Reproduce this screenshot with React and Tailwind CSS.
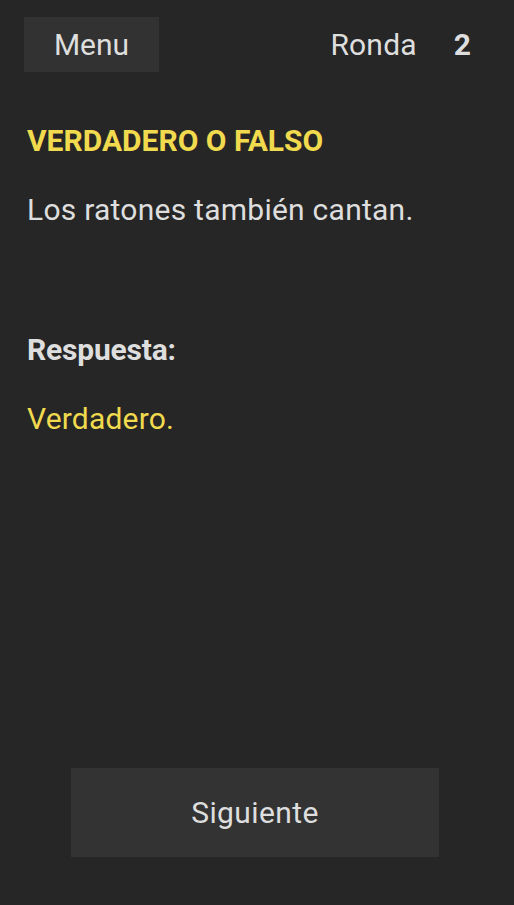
import React from 'react';

const App = () => {
    return (
        <div className="w-[514px] h-[905px] bg-[#262626] flex flex-col font-['Roboto',sans-serif] text-[#dedede] overflow-hidden">
            {/* Top bar */}
            <div className="flex items-center justify-between pt-[17px] pl-[24px] pr-[43px]">
                <button className="w-[135px] h-[55px] bg-[#323232] text-[30px] leading-[32px] text-[#dedede]">
                    Menu
                </button>
                <div className="flex items-center gap-[37px] text-[30px] leading-[32px]">
                    <span className="tracking-[0.2px]">Ronda</span>
                    <span className="font-bold">2</span>
                </div>
            </div>

            {/* Question */}
            <div className="flex flex-col px-[27px] pt-[53px]">
                <h1 className="text-[#f1da4e] font-bold text-[30px] leading-[32px]">VERDADERO O FALSO</h1>
                <p className="mt-[37px] text-[30px] leading-[32px] tracking-[0.25px]">Los ratones también cantan.</p>
                <h2 className="mt-[108px] font-bold text-[30px] leading-[32px] tracking-[-0.2px]">Respuesta:</h2>
                <p className="mt-[37px] text-[#f1da4e] text-[30px] leading-[32px] tracking-[0.2px]">Verdadero.</p>
            </div>

            <div className="flex-1" />

            {/* Next button */}
            <div className="flex pl-[71px] pb-[48px]">
                <button className="w-[368px] h-[89px] bg-[#333333] text-[30px] leading-[32px] tracking-[0.4px] text-[#dedede]">
                    Siguiente
                </button>
            </div>
        </div>
    );
};

export default App;
